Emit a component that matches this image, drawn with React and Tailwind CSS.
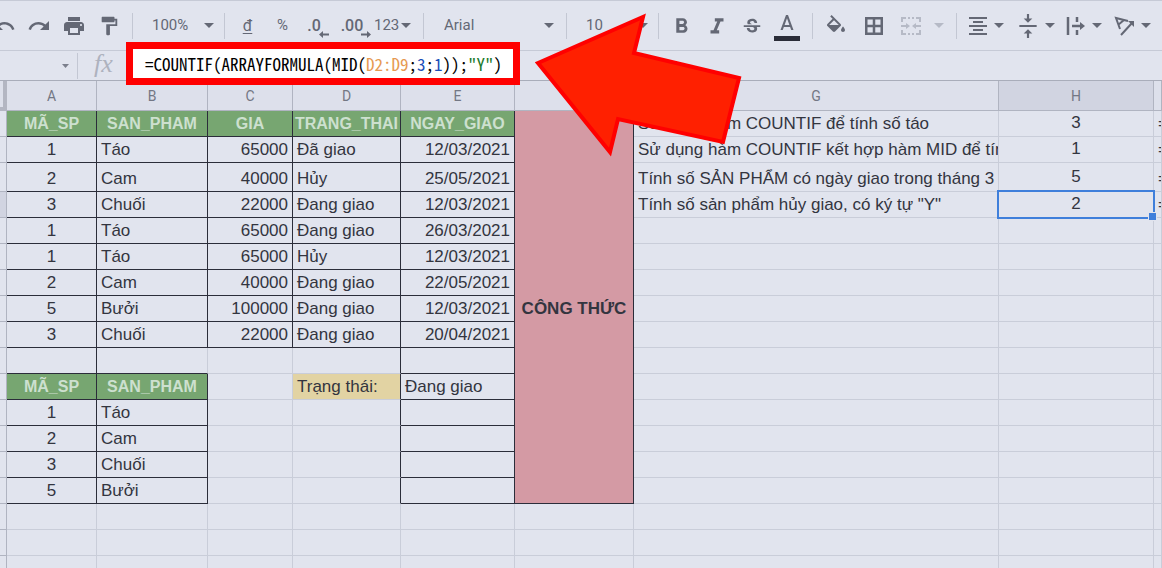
import React from 'react';
import {
    MdUndo,
    MdRedo,
    MdPrint,
    MdFormatPaint,
    MdFormatBold,
    MdFormatItalic,
    MdStrikethroughS,
    MdFormatAlignCenter,
    MdVerticalAlignCenter,
} from 'react-icons/md';

const COLUMNS = [
    { id: 'A', width: 'w-[90px]', align: 'text-center' },
    { id: 'B', width: 'w-[111px]', align: 'text-left' },
    { id: 'C', width: 'w-[85px]', align: 'text-right' },
    { id: 'D', width: 'w-[108px]', align: 'text-left' },
    { id: 'E', width: 'w-[114px]', align: 'text-right' },
    { id: 'F', width: 'w-[119px]', align: 'text-center' },
    { id: 'G', width: '', align: 'text-left' },
    { id: 'H', width: 'w-[155px]', align: 'text-center' },
    { id: 'I', width: 'w-[8px]', align: 'text-left' },
];

const ROWS = [
    { A: 'MÃ_SP', B: 'SAN_PHAM', C: 'GIA', D: 'TRANG_THAI', E: 'NGAY_GIAO', G: 'Sử dụng hàm COUNTIF để tính số táo', H: '3', I: '=' },
    { A: '1', B: 'Táo', C: '65000', D: 'Đã giao', E: '12/03/2021', G: 'Sử dụng hàm COUNTIF kết hợp hàm MID để tín', H: '1', I: '=' },
    { A: '2', B: 'Cam', C: '40000', D: 'Hủy', E: '25/05/2021', G: 'Tính số SẢN PHẨM có ngày giao trong tháng 3', H: '5', I: '=' },
    { A: '3', B: 'Chuối', C: '22000', D: 'Đang giao', E: '12/03/2021', G: 'Tính số sản phẩm hủy giao, có ký tự "Y"', H: '2', I: '=' },
    { A: '1', B: 'Táo', C: '65000', D: 'Đang giao', E: '26/03/2021' },
    { A: '1', B: 'Táo', C: '65000', D: 'Hủy', E: '12/03/2021' },
    { A: '2', B: 'Cam', C: '40000', D: 'Đang giao', E: '22/05/2021' },
    { A: '5', B: 'Bưởi', C: '100000', D: 'Đang giao', E: '12/03/2021' },
    { A: '3', B: 'Chuối', C: '22000', D: 'Đang giao', E: '20/04/2021' },
    {},
    { A: 'MÃ_SP', B: 'SAN_PHAM', D: 'Trạng thái:', E: 'Đang giao' },
    { A: '1', B: 'Táo' },
    { A: '2', B: 'Cam' },
    { A: '3', B: 'Chuối' },
    { A: '5', B: 'Bưởi' },
    {},
    {},
    {},
];

// The merged cell in column F covers this many rows
const MERGED_ROWS = 15;

const FORMULA = [
    { text: '=COUNTIF(ARRAYFORMULA(MID(', color: 'text-black' },
    { text: 'D2:D9', color: 'text-[#e69a52]' },
    { text: ';', color: 'text-black' },
    { text: '3', color: 'text-[#1a4fb8]' },
    { text: ';', color: 'text-black' },
    { text: '1', color: 'text-[#1a4fb8]' },
    { text: '));', color: 'text-black' },
    { text: '"Y"', color: 'text-[#1c7a2c]' },
    { text: ')', color: 'text-black' },
];

function isDarkRight(col, row) {
    if (row <= 9) return 'ABCDE'.includes(col);
    if (row === 10) return 'ADE'.includes(col);
    if (row <= 15) return 'ABDE'.includes(col);
    return false;
}

function isDarkBottom(col, row) {
    if (row <= 9) return 'ABCDE'.includes(col);
    if (row <= 15) return 'ABE'.includes(col);
    return false;
}

function isHeading(col, row) {
    return (row === 1 && 'ABCDE'.includes(col)) || (row === 11 && 'AB'.includes(col));
}

function Caret({ className = 'h-[5px] w-[10px]' }) {
    return (
        <svg className={`pointer-events-none shrink-0 ${className}`} viewBox="0 0 10 5" preserveAspectRatio="none" fill="currentColor">
            <path d="M0 0h10L5 5z" />
        </svg>
    );
}

function Divider() {
    return <div className="h-[26px] w-px shrink-0 bg-[#c3c7d3]" />;
}

function ToolButton({ label, className = 'w-[35px] justify-center', children }) {
    return (
        <button type="button" aria-label={label} className={`flex h-9 shrink-0 items-center ${className}`}>
            {children}
        </button>
    );
}

function MenuButton({ label, children }) {
    return (
        <button type="button" aria-label={label} className="flex h-9 w-[49px] shrink-0 items-center gap-1 pl-[9px]">
            {children}
            <Caret />
        </button>
    );
}

function ToolSelect({ label, value, className }) {
    return (
        <label className={`flex h-9 shrink-0 items-center ${className}`}>
            <select aria-label={label} defaultValue={value} className="min-w-0 flex-1 appearance-none bg-transparent outline-none">
                <option value={value}>{value}</option>
            </select>
            <Caret />
        </label>
    );
}

function DecimalIcon({ text, forward }) {
    return (
        <span className="relative text-[16px] font-medium">
            {text}
            <svg className="absolute -right-2 bottom-0 h-[7px] w-[10px]" viewBox="0 0 10 7" fill="currentColor">
                {forward ? <path d="M6 0l4 3.500-4 3.500V4.500H0v-2h6z" /> : <path d="M4 0L0 3.500 4 7V4.500h6v-2H4z" />}
            </svg>
        </span>
    );
}

function Toolbar() {
    return (
        <div className="overflow-hidden border-t border-b border-[#c6cad6]">
            <div className="-ml-[14px] flex h-[49px] items-center text-[15px] text-[#646875]">
                <ToolButton label="Undo"><MdUndo size={24} /></ToolButton>
                <ToolButton label="Redo"><MdRedo size={24} /></ToolButton>
                <ToolButton label="Print"><MdPrint size={24} /></ToolButton>
                <ToolButton label="Paint format"><MdFormatPaint size={22} /></ToolButton>
                <div className="w-[6px] shrink-0" />
                <Divider />
                <ToolSelect label="Zoom" value="100%" className="w-[91px] pr-[10px] pl-[19px]" />
                <Divider />
                <ToolButton label="Currency" className="w-[45px] justify-center">
                    <span className="text-[16px] underline underline-offset-2">đ</span>
                </ToolButton>
                <ToolButton label="Percent" className="w-[25px] justify-center">%</ToolButton>
                <ToolButton label="Decrease decimals" className="w-[38px] justify-center"><DecimalIcon text=".0" /></ToolButton>
                <ToolButton label="Increase decimals" className="w-[38px] justify-center"><DecimalIcon text=".00" forward /></ToolButton>
                <ToolButton label="More formats" className="w-[52px] gap-[2px] pl-[3px]">123<Caret /></ToolButton>
                <Divider />
                <ToolSelect label="Font" value="Arial" className="w-[142px] pr-3 pl-5" />
                <Divider />
                <ToolSelect label="Font size" value="10" className="w-[91px] pr-[10px] pl-[19px]" />
                <Divider />
                <div className="flex w-[153px] shrink-0 pt-[2px] pl-[5px]">
                    <ToolButton label="Bold"><MdFormatBold size={25} /></ToolButton>
                    <ToolButton label="Italic"><MdFormatItalic size={26} /></ToolButton>
                    <ToolButton label="Strikethrough"><MdStrikethroughS size={22} /></ToolButton>
                    <ToolButton label="Text color">
                        <svg className="h-[30px] w-[26px]" viewBox="-1 0 26 30" fill="currentColor">
                            <path d="M11 3L5.500 18h2.250l1.120-3h6.250l1.120 3h2.250L13 3h-2zm-1.380 10L12 6.200 14.380 13H9.620z" />
                            <path d="M-1 24h26v5H-1z" fill="#2a2c38" />
                        </svg>
                    </ToolButton>
                </div>
                <Divider />
                <div className="flex w-[143px] shrink-0 items-center pl-1">
                    <ToolButton label="Fill color" className="w-[38px] justify-center">
                        <svg className="h-6 w-6" viewBox="0 -1 24 24" fill="currentColor">
                            <path d="M16.560 8.940L7.620 0 6.210 1.410l2.380 2.380-5.150 5.150c-.59.59-.59 1.540 0 2.120l5.500 5.500c.29.29.68.44 1.060.44s.77-.15 1.060-.44l5.500-5.500c.59-.58.59-1.530 0-2.120zM5.210 10L10 5.210 14.790 10H5.210zM19 11.500s-2 2.170-2 3.500c0 1.100.9 2 2 2s2-.9 2-2c0-1.330-2-3.500-2-3.500z" />
                        </svg>
                    </ToolButton>
                    <ToolButton label="Borders" className="w-[38px] justify-center">
                        <svg className="h-[18px] w-[18px]" viewBox="0 0 18 18" fill="none" stroke="currentColor" strokeWidth="2.5">
                            <path d="M1.250 1.250h15.500v15.500H1.250zM9 1v16M1 9h16" />
                        </svg>
                    </ToolButton>
                    <ToolButton label="Merge cells" className="w-[56px] gap-[13px] pl-2 text-[#b6bac6]">
                        <svg className="h-[18px] w-5 shrink-0" viewBox="0 0 20 18" fill="none" stroke="currentColor" strokeWidth="2">
                            <path d="M1 5V1h4M7 1h2M11 1h2M15 1h4v4M1 13v4h4M7 17h2M11 17h2M15 17h4v-4M0 9h6M20 9h-6" />
                            <path d="M5 6l4 3-4 3zM15 6l-4 3 4 3z" fill="currentColor" stroke="none" />
                        </svg>
                        <Caret />
                    </ToolButton>
                </div>
                <Divider />
                <MenuButton label="Horizontal align"><MdFormatAlignCenter size={24} /></MenuButton>
                <MenuButton label="Vertical align"><MdVerticalAlignCenter size={26} /></MenuButton>
                <MenuButton label="Text wrapping">
                    <svg className="h-6 w-6" viewBox="0 0 24 24" fill="none" stroke="currentColor" strokeWidth="2.5">
                        <path d="M4 3v18M13 3v5M13 16v5M8 12h10" />
                        <path d="M16 8l5 4-5 4z" fill="currentColor" stroke="none" />
                    </svg>
                </MenuButton>
                <MenuButton label="Text rotation">
                    <svg className="h-6 w-6" viewBox="0 0 24 24" fill="none" stroke="currentColor" strokeWidth="2">
                        <path d="M7 15L3 4l12 3M5 11l6-5M8 21L19 9" />
                        <path d="M15 7h6v6z" fill="currentColor" stroke="none" />
                    </svg>
                </MenuButton>
            </div>
        </div>
    );
}

function FormulaBar() {
    return (
        <div className="flex h-[30px] items-center border-b border-[#a9adba]">
            <label className="flex w-[77px] shrink-0 items-center pr-2">
                <input type="text" aria-label="Name box" className="h-6 min-w-0 flex-1 bg-transparent outline-none" />
                <Caret className="h-[4px] w-[7px] text-[#7b7f8c]" />
            </label>
            <Divider />
            <div className="w-[55px] shrink-0 pb-1 pl-4 font-['Liberation_Serif',serif] text-[26px] leading-6 text-[#aeb2be] italic">fx</div>
            <div
                role="textbox"
                aria-label="Formula"
                contentEditable
                suppressContentEditableWarning
                className="relative z-10 -mt-1 h-[29px] w-[380px] bg-white pl-3 font-['Noto_Sans_Mono_CJK_JP','Liberation_Mono','Noto_Sans_CJK_JP',monospace] text-[17px] leading-[30px] whitespace-nowrap outline-7 outline-[#ff0000]"
            >
                {FORMULA.map((token, index) => (
                    <span key={index} className={token.color}>{token.text}</span>
                ))}
            </div>
        </div>
    );
}

function Cell({ column, row, value }) {
    const selected = column.id === 'H' && row === 4;
    const right = isDarkRight(column.id, row) ? 'border-r-[#2b2d3a]' : 'border-r-[#c9cdd9]';
    const bottom = isDarkBottom(column.id, row) ? 'border-b-[#2b2d3a]' : 'border-b-[#c9cdd9]';
    const borders = `border-r border-b ${right} ${bottom}`;

    if (isHeading(column.id, row)) {
        return (
            <td className={`overflow-hidden bg-[#77a671] p-0 pb-px text-center align-bottom text-[16px] font-bold whitespace-nowrap text-[#cde0cf] ${borders}`}>
                {value}
            </td>
        );
    }

    const fill = row === 11 && column.id === 'D' ? 'bg-[#e2d3a3]' : '';
    const align = row === 11 && column.id === 'E' ? 'text-left' : column.align;
    const vertical = column.id === 'H' ? 'align-middle' : 'align-bottom';

    return (
        <td className={`px-1 pt-0 pb-px whitespace-nowrap ${borders} ${fill} ${align} ${vertical} ${selected ? 'relative' : 'overflow-hidden'}`}>
            {value}
            {selected && (
                <div className="absolute -inset-[2px] border-2 border-[#3f7fdb]">
                    <div className="absolute -right-[4px] -bottom-[4px] h-[9px] w-[9px] border border-[#e1e4ee] bg-[#3f7fdb]" />
                </div>
            )}
        </td>
    );
}

function Sheet() {
    return (
        <table className="w-full table-fixed border-separate border-spacing-0 font-['Liberation_Sans',Arial,sans-serif] text-[17px] leading-[22px] text-[#33353f]">
            <colgroup>
                <col className="w-[7px]" />
                {COLUMNS.map((column) => (
                    <col key={column.id} className={column.width} />
                ))}
            </colgroup>
            <thead>
                <tr className="h-[30px] bg-[#dde0eb] font-['Roboto',sans-serif] text-[14px] text-[#737784]">
                    <th className="border-r-4 border-b-4 border-[#b3b6c2]" />
                    {COLUMNS.map((column) => (
                        <th
                            key={column.id}
                            className={`overflow-hidden border-r border-b border-[#b0b4c1] p-0 font-normal ${column.id === 'H' ? 'bg-[#d1d4e1]' : ''}`}
                        >
                            {'FI'.includes(column.id) ? '' : column.id}
                        </th>
                    ))}
                </tr>
            </thead>
            <tbody>
                {ROWS.map((values, index) => {
                    const row = index + 1;
                    return (
                        <tr key={row} className={row === 3 ? 'h-[29px]' : 'h-[26px]'}>
                            <th className={`border-r border-b border-[#b0b4c1] p-0 ${row === 4 ? 'bg-[#d1d4e1]' : ''}`} />
                            {COLUMNS.map((column) => {
                                if (column.id === 'F' && row <= MERGED_ROWS) {
                                    if (row > 1) return null;
                                    return (
                                        <td key="F" rowSpan={MERGED_ROWS} className="border-r border-b border-[#2b2d3a] bg-[#d49aa4] p-0 pt-[3px] text-center align-middle font-bold">
                                            CÔNG THỨC
                                        </td>
                                    );
                                }
                                return <Cell key={column.id} column={column} row={row} value={values[column.id]} />;
                            })}
                        </tr>
                    );
                })}
            </tbody>
        </table>
    );
}

function PointerArrow() {
    return (
        <svg className="pointer-events-none absolute top-[12px] left-[532px] z-20 h-[146px] w-[212px]" viewBox="532 12 212 146">
            <path d="M538 63L643 17L634 53L739 78L723 142L618 119L610 152Z" fill="#ff2000" stroke="#ff0000" strokeWidth="4" />
        </svg>
    );
}

export default function App() {
    return (
        <div className="relative h-screen overflow-hidden bg-[#e1e4ee] font-['Roboto',sans-serif]">
            <Toolbar />
            <FormulaBar />
            <Sheet />
            <PointerArrow />
        </div>
    );
}
